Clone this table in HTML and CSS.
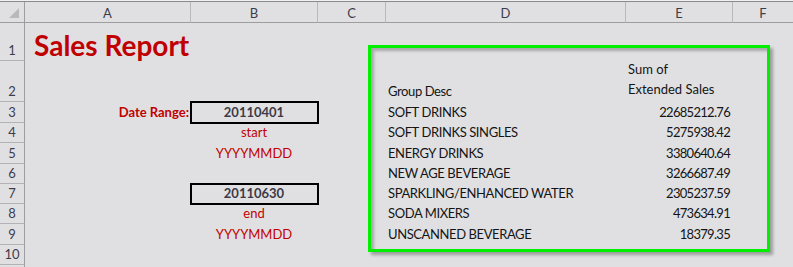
FILE: index.html
```html
<!DOCTYPE html>
<html>
<head>
<meta charset="utf-8">
<link rel="stylesheet" href="styles.css">
</head>
<body>
<div class="sheet">
  <div class="grid">
    <div class="hd corner"><span class="tri"></span></div>
    <div class="hd col">A</div>
    <div class="hd col">B</div>
    <div class="hd col">C</div>
    <div class="hd col">D</div>
    <div class="hd col">E</div>
    <div class="hd col last">F</div>

    <div class="hd row">1</div>
    <div class="c title">Sales Report</div>
    <div class="c"></div><div class="c"></div><div class="c"></div><div class="c"></div><div class="c"></div>

    <div class="hd row">2</div>
    <div class="c"></div><div class="c"></div><div class="c"></div>
    <div class="c txt">Group Desc</div>
    <div class="c txt wrap">Sum of<br>Extended Sales</div>
    <div class="c"></div>

    <div class="hd row">3</div>
    <div class="c label">Date Range:</div>
    <div class="c datebox">20110401</div>
    <div class="c"></div>
    <div class="c txt">SOFT DRINKS</div>
    <div class="c num">22685212.76</div>
    <div class="c"></div>

    <div class="hd row">4</div>
    <div class="c"></div>
    <div class="c hint">start</div>
    <div class="c"></div>
    <div class="c txt">SOFT DRINKS SINGLES</div>
    <div class="c num">5275938.42</div>
    <div class="c"></div>

    <div class="hd row">5</div>
    <div class="c"></div>
    <div class="c hint">YYYYMMDD</div>
    <div class="c"></div>
    <div class="c txt">ENERGY DRINKS</div>
    <div class="c num">3380640.64</div>
    <div class="c"></div>

    <div class="hd row">6</div>
    <div class="c"></div><div class="c"></div><div class="c"></div>
    <div class="c txt">NEW AGE BEVERAGE</div>
    <div class="c num">3266687.49</div>
    <div class="c"></div>

    <div class="hd row">7</div>
    <div class="c"></div>
    <div class="c datebox">20110630</div>
    <div class="c"></div>
    <div class="c txt">SPARKLING/ENHANCED WATER</div>
    <div class="c num">2305237.59</div>
    <div class="c"></div>

    <div class="hd row">8</div>
    <div class="c"></div>
    <div class="c hint">end</div>
    <div class="c"></div>
    <div class="c txt">SODA MIXERS</div>
    <div class="c num">473634.91</div>
    <div class="c"></div>

    <div class="hd row">9</div>
    <div class="c"></div>
    <div class="c hint">YYYYMMDD</div>
    <div class="c"></div>
    <div class="c txt">UNSCANNED BEVERAGE</div>
    <div class="c num">18379.35</div>
    <div class="c"></div>

    <div class="hd row">10</div>
    <div class="c"></div><div class="c"></div><div class="c"></div><div class="c"></div><div class="c"></div><div class="c"></div>

    <div class="hd row"></div>
    <div class="c"></div><div class="c"></div><div class="c"></div><div class="c"></div><div class="c"></div><div class="c"></div>
  </div>
  <div class="frame"></div>
</div>
</body>
</html>
```

FILE: styles.css
```css
html, body {
  margin: 0;
  padding: 0;
  background: #e0e0e3;
}
body {
  font-family: Lato, "Open Sans", sans-serif;
  color: #141414;
}
.sheet {
  position: relative;
  width: 793px;
  height: 267px;
  overflow: hidden;
  border-top: 1px solid #f0f0f2;
  box-sizing: border-box;
}
.grid {
  display: grid;
  grid-template-columns: 25px 166px 127px 68px 240px 107px 1fr;
  grid-template-rows: 21px 38px 41px 21px 20px 21px 20px 20px 20px 21px 20px 1fr;
  border-top: 1px solid #8a8a8a;
  height: 266px;
  box-sizing: border-box;
}
.hd {
  background: #e0e0e3;
  color: #3d3d4a;
  font-size: 13px;
  display: flex;
  align-items: center;
  justify-content: center;
  box-sizing: border-box;
}
.col {
  border-bottom: 1px solid #9d9d9f;
  border-right: 1px solid #b9b9bc;
  padding-top: 1px;
}
.col.last { border-right: none; }
.corner {
  border-bottom: 1px solid #9d9d9f;
  border-right: 1px solid #9d9d9f;
  position: relative;
}
.tri {
  position: absolute;
  right: 5px;
  bottom: 4px;
  width: 0;
  height: 0;
  border-left: 10px solid transparent;
  border-bottom: 10px solid #b9b9bc;
}
.row {
  border-right: 1px solid #9d9d9f;
  border-bottom: 1px solid #b3b3b6;
  align-items: flex-end;
  padding-bottom: 2px;
}
.c {
  display: flex;
  align-items: flex-end;
  font-size: 13px;
  letter-spacing: -0.4px;
  line-height: 16px;
  padding: 0 3px 3px 2px;
  box-sizing: border-box;
  white-space: nowrap;
  min-width: 0;
}
.title {
  color: #c00000;
  font-weight: 700;
  font-size: 28px;
  line-height: 30px;
  padding-left: 9px;
  padding-bottom: 1px;
  letter-spacing: 0;
}
.label {
  color: #c00000;
  font-weight: 700;
  justify-content: flex-end;
  padding-right: 2px;
  letter-spacing: 0;
}
.datebox {
  justify-content: center;
  font-weight: 700;
  color: #3c3a46;
  letter-spacing: 0;
  outline: 2px solid #000;
  outline-offset: -1px;
}
.hint {
  justify-content: center;
  color: #c00000;
  letter-spacing: 0;
}
.txt { padding-left: 2px; }
.wrap {
  white-space: normal;
  line-height: 20px;
  letter-spacing: 0;
}
.num {
  justify-content: flex-end;
  padding-right: 3px;
  letter-spacing: -0.7px;
}
.frame {
  position: absolute;
  left: 368px;
  top: 44px;
  width: 402px;
  height: 207px;
  box-sizing: border-box;
  border: 3px solid #00f000;
  box-shadow: 3px 3px 3px rgba(0, 0, 0, 0.3), inset 3px 3px 3px rgba(0, 0, 0, 0.25);
  pointer-events: none;
}
```
